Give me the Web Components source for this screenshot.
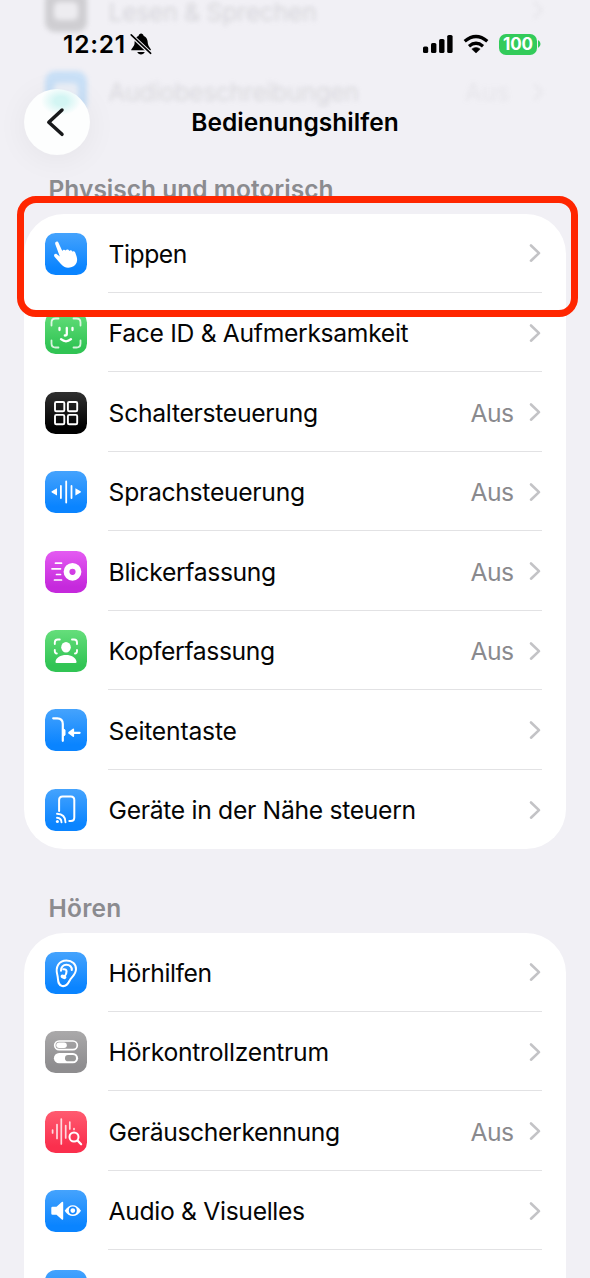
<!DOCTYPE html>
<html lang="de">
<head>
<meta charset="utf-8">
<title>Bedienungshilfen</title>
<style>
html,body{margin:0;padding:0}
body{width:590px;height:1278px;overflow:hidden;background:#f1f0f5;font-family:Inter,"Liberation Sans",sans-serif;color:#050505}
</style>
</head>
<body>
<settings-screen></settings-screen>
<script>
const define=(name,cls)=>customElements.define(name,cls);
const attach=(el,html)=>{const r=el.attachShadow({mode:'open'});const t=document.createElement('template');t.innerHTML=html;r.append(t.content.cloneNode(true));return r;};

/* Text on one line whose tracking is adjusted to a given advance width. */
define('tracked-text',class extends HTMLElement{
  connectedCallback(){
    if(this.shadowRoot)return;
    const r=attach(this,`<style>:host{display:inline-block;white-space:nowrap}span{display:inline-block}</style><span></span>`);
    const s=r.querySelector('span');
    const text=this.getAttribute('text');
    s.textContent=text;
    const w=parseFloat(this.getAttribute('fit'));
    if(w){const n=s.getBoundingClientRect().width;s.style.letterSpacing=((w-n)/text.length).toFixed(3)+'px';}
  }
});

const glyphs={
tap:`<path d="M14.800 23.500 10.300 11.200c-.8-2.500 2.300-3.700 3.300-1.300l3.700 8.200c.3-1.700 2.500-2 3.300-.5.8-1.500 3-1.400 3.600.3 1-1.300 2.800-.8 3.400.8 1-.8 2.300-.2 2.800 1.200l1.200 3.600c1.600 4.900-.5 9-4.800 10.500-4.400 1.500-8.100.4-10.900-3l-6.400-7.300c-1.400-1.700.6-3.700 2.400-2.500z" fill="#fff"/>`,
face:`<g fill="none" stroke="#fff" stroke-linecap="round"><path stroke-width="1.800" opacity=".8" d="M6.500 13.500v-3q0-4 4-4h3M28.500 6.500h3q4 0 4 4v3M35.500 28.500v3q0 4-4 4h-3M13.500 35.500h-3q-4 0-4-4v-3"/><path stroke-width="2.300" d="M14.500 16v2M27.500 16v2M21.800 16v6q0 1.500-2 1.500M16 27.200q5 4.300 10 0"/></g>`,
grid:`<g fill="none" stroke="#fff" stroke-width="1.900"><rect x="10" y="10" width="9.300" height="9.300" rx="1.300"/><rect x="22.900" y="10" width="9.300" height="9.300" rx="1.300"/><rect x="10" y="22.900" width="9.300" height="9.300" rx="1.300"/><rect x="22.900" y="22.900" width="9.300" height="9.300" rx="1.300"/></g>`,
voice:`<path d="M12 17.200v7.200l-5.200-3q-.8-.6 0-1.200zM30.400 17.200v7.200l5.200-3q.8-.6 0-1.200z" fill="#fff"/><path d="M15.900 15v12M21.200 10.500v21M26.500 15v12" stroke="#fff" stroke-width="1.800" stroke-linecap="round"/>`,
gaze:`<circle cx="27.500" cy="20.800" r="6" fill="none" stroke="#fff" stroke-width="5.800"/><path d="M10.500 12.200h6M7 17.800h8.500M11.500 23.500h4M9.500 29h7" stroke="#fff" stroke-width="1.700" stroke-linecap="round"/>`,
head:`<g fill="none" stroke="#fff" stroke-width="1.900" stroke-linecap="round"><path d="M9.800 14v-1.500q0-3 3-3h2M27 9.500h2q3 0 3 3V14M9.800 20v1q0 2.500 2 2.500M32 20v1q0 2.500-2 2.500"/></g><ellipse cx="21" cy="17.300" rx="4.800" ry="5.300" fill="#fff"/><path d="M11.700 33q-1.500 0-1.200-1.500c.8-4 5-6.500 10.500-6.500s9.700 2.500 10.500 6.500q.3 1.500-1.200 1.500z" fill="#fff"/>`,
side:`<path d="M8.200 9.300h4q5.600 0 5.600 5.700v16.800" fill="none" stroke="#fff" stroke-width="2.200" stroke-linecap="round"/><path d="M18 19.500q2.500.3 2.500 2v4q0 1.700-2.500 2z" fill="#fff"/><path d="M26 23.800h8.600" stroke="#fff" stroke-width="2.200" stroke-linecap="round"/><path d="M23.500 23q-.7.800 0 1.500l4.300 3.300q1.300.6 1.300-.8v-6.500q0-1.300-1.300-.7z" fill="#fff"/>`,
near:`<path d="M14.100 22V11q0-3.500 3.500-3.500h8.200q3.500 0 3.500 3.500v17.500q0 3.500-3.500 3.500h-1.500" fill="none" stroke="#fff" stroke-width="2" stroke-linecap="round"/><g fill="none" stroke="#fff" stroke-width="1.900" stroke-linecap="round"><path d="M12 24.800q8.300.2 8.500 8.400M12 28.800q4.300.2 4.500 4.400"/></g><circle cx="12.400" cy="32.600" r="1.500" fill="#fff"/>`,
ear:`<g fill="none" stroke="#fff" stroke-linecap="round" stroke-linejoin="round"><path stroke-width="2" d="M12.400 23.200c-2.400-8.300 1.500-14.700 9.100-14.700 5.800 0 9.700 3.800 9.500 8.700-.2 5.500-4.500 7.800-6.300 11.300-1.700 3.500-3.900 6.300-7.600 5.500-5-1.100-3.600-6.600-4.700-10.800z"/><path stroke-width="2.100" d="M16 18.700c0-3.600 2.200-5.900 5.400-5.900 3.500 0 5.600 2.100 5.400 5.200M18.500 17.300c3.700-.4 4.100 3.200.8 7.600"/></g><ellipse cx="18.500" cy="24.800" rx="3" ry="2" transform="rotate(25 18.500 24.800)" fill="#fff"/>`,
toggles:`<rect x="9.700" y="10" width="22.600" height="8.700" rx="4.350" fill="none" stroke="#fff" stroke-width="1.700"/><rect x="11.300" y="11.600" width="10.500" height="5.500" rx="2.750" fill="#fff"/><rect x="8.900" y="22" width="24.200" height="10.300" rx="5.150" fill="#fff"/><rect x="20" y="24" width="11" height="6.300" rx="3.150" fill="#999"/>`,
sound:`<g stroke="#fff" stroke-linecap="round" stroke-width="1.700" opacity=".8"><path d="M7.600 19v3M12 13.500v14M16.300 8v25M20.700 14.500v12.500M24.800 11v7M29 17.500v1"/></g><circle cx="29" cy="26" r="4.500" fill="none" stroke="#fff" stroke-width="2"/><path d="m32.500 29.500 3.600 3.700" stroke="#fff" stroke-width="2.300" stroke-linecap="round"/>`,
av:`<path d="M7.500 16.800h4l5.300-4.800q1.400-1 1.400.8v16q0 1.700-1.400.7l-5.300-4.700h-4q-1.200 0-1.200-1.200v-5.600q0-1.200 1.200-1.200z" fill="#fff"/><path d="M19.700 20.800c4.200-7.500 12-7.500 16.300 0-4.300 7-12.100 7-16.300 0z" fill="#fff"/><circle cx="27.800" cy="20.600" r="3.200" fill="none" stroke="#1487ff" stroke-width="1.600"/>`,
none:''
};
const fills={blue:['#45a3fd','#0a84ff'],green:['#65de7b','#31c454'],black:['#303030','#000'],purple:['#e45bf2','#c529dc'],gray:['#aaa9aa','#8e8d8f'],red:['#ff5b70','#fa2f4d']};

define('app-icon',class extends HTMLElement{
  connectedCallback(){
    if(this.shadowRoot)return;
    const [a,b]=fills[this.getAttribute('tone')];
    attach(this,`<style>:host{display:block;width:42px;height:42px;flex:none;border-radius:10.500px;background:linear-gradient(${a},${b} 85%)}svg{display:block}</style><svg width="42" height="42" viewBox="0 0 42 42">${glyphs[this.getAttribute('glyph')]}</svg>`);
  }
});

define('settings-row',class extends HTMLElement{
  connectedCallback(){
    if(this.shadowRoot)return;
    const g=n=>this.getAttribute(n);
    attach(this,`<style>
:host{display:flex;height:79.450px;padding:0 24px 0 21px;box-sizing:border-box;gap:21px}
app-icon{margin-top:19.300px}
.body{flex:1;display:flex;align-items:center;box-sizing:border-box;height:79.450px;padding-bottom:.5px;border-bottom:1.500px solid #e2e2e4;font-size:24.700px;line-height:30px}
:host([last]) .body{border-color:transparent}
.label{flex:1;padding:3px 0 0 .6px}.value{color:#8a8a8e;padding-top:3px;margin-right:14.500px}
svg{display:block;margin-right:-.500px;margin-top:2px}
</style><app-icon glyph="${g('glyph')}" tone="${g('tone')}"></app-icon>
<div class="body"><tracked-text class="label" text="${g('label').replace('&','&amp;')}" fit="${g('fit')-.8}"></tracked-text>
${g('value')?`<tracked-text class="value" text="${g('value')}" fit="43"></tracked-text>`:''}
<svg width="14" height="20" viewBox="0 0 14 20"><path d="m3 2.500 8 7.600-8 7.600" fill="none" stroke="#c3c3c6" stroke-width="2.600" stroke-linecap="round" stroke-linejoin="round"/></svg></div>`);
  }
});

define('settings-group',class extends HTMLElement{
  constructor(){
    super();
    attach(this,`<style>:host{display:block;margin:0 24.500px 0 24px;background:#fff;border-radius:40px;overflow:hidden}</style><slot></slot>`);
  }
});

define('section-title',class extends HTMLElement{
  connectedCallback(){
    if(this.shadowRoot)return;
    attach(this,`<style>:host{display:block;padding-left:48.500px;color:#8b8b8f;font-weight:600;font-size:24.500px;line-height:30px}</style><tracked-text text="${this.getAttribute('text')}" fit="${this.getAttribute('fit')}"></tracked-text>`);
  }
});

define('status-bar',class extends HTMLElement{
  constructor(){
    super();
    attach(this,`<style>
:host{display:flex;align-items:center;height:30px;padding:29px 53px 0 63px;font-weight:600;font-size:24.500px;line-height:30px;color:#000}
.bell{margin-left:4px;margin-right:auto}.wifi{margin:0 10px 0 10.500px}
.batt{display:flex;align-items:center;justify-content:center;width:38px;height:21px;border-radius:7px;background:#33cb5a;color:#fff;font-weight:700;font-size:17px;line-height:21px}
svg{display:block}
</style>
<tracked-text text="12:21" fit="63"></tracked-text>
<svg class="bell" width="22" height="24" viewBox="0 0 22 24"><path d="M1.200 18.300c0-1.800 3-3.600 3.300-6.500.3-4 .7-6.500 4-7.800.4-3.400 4.800-3.400 5.200 0 3.300 1.300 3.900 3.800 4.200 7.800.3 2.900 3.200 4.700 3.200 6.500zM7.300 20h7.400c-.8 3.200-6.600 3.200-7.400 0z"/><path d="m1 2.800 19.500 18.500" stroke="#f1f0f5" stroke-width="3.900"/><path d="m1.200 2.800 19.500 18.500" stroke="#000" stroke-width="1.600" stroke-linecap="round"/></svg>
<svg width="30" height="20" viewBox="0 0 30 20"><rect x="0" y="12.500" width="5.200" height="6.500" rx="1.600"/><rect x="8" y="9" width="5.400" height="10" rx="1.600"/><rect x="16.100" y="5" width="5.400" height="14" rx="1.600"/><rect x="24.200" y="1" width="5.400" height="18" rx="1.600"/></svg>
<svg class="wifi" width="26" height="20" viewBox="0 0 26 20"><g fill="none" stroke="#000" stroke-width="3.300"><path d="M1.700 7.300q11.300-9.600 22.600 0"/><path d="M6 12.200q7-5.800 14 0"/></g><path d="M13 19 8.800 15.100q4.200-3.400 8.400 0z" stroke="#000" stroke-width=".5" stroke-linejoin="round"/></svg>
<div class="batt"><tracked-text text="100" fit="30"></tracked-text></div>
<svg width="3" height="8" viewBox="0 0 3 8" style="margin-left:1px;margin-right:-4px"><path d="M0 0q2.500 1.500 2.500 4T0 8z" fill="#33cb5a"/></svg>`);
  }
});

/* Rows that have scrolled beneath the translucent header. */
define('scrolled-under',class extends HTMLElement{
  constructor(){
    super();
    const chevron='<svg class="e" width="14" height="20" viewBox="0 0 14 20"><path d="m3 2 8 8-8 8" fill="none" stroke="#999" stroke-width="2.600"/></svg>';
    attach(this,`<style>
:host{display:block;position:absolute;inset:0 24px auto 24px;filter:blur(2.800px);color:#808086}
.r{display:flex;height:79px;align-items:center;padding:0 21px;font-size:24.700px;line-height:24px;gap:21.500px;opacity:.21}
.top{height:52px;align-items:flex-start;opacity:.24}
.top .i{margin-top:-10px}
.i{width:42px;height:42px;border-radius:10px;background:#666;display:flex;align-items:center;justify-content:center}
.b{background:#35a7ff}.i:before{content:"";width:24px;height:18px;border-radius:5px;background:#fff;opacity:.8}
.l{flex:1}.e{opacity:.45}
</style><div class="r top"><div class="i"></div><tracked-text class="l" text="Lesen &amp; Sprechen" fit="208"></tracked-text>${chevron}</div>
<div class="r"><div class="i b"></div><tracked-text class="l" text="Audiobeschreibungen" fit="250"></tracked-text><span class="e">Aus</span>${chevron}</div>`);
  }
});

define('nav-bar',class extends HTMLElement{
  constructor(){
    super();
    attach(this,`<style>
:host{display:grid;grid-template-columns:66px 1fr 66px;align-items:center;padding:0 24px;height:66px;margin-top:30px}
.back{position:relative;width:66px;height:66px;border-radius:50%;background:radial-gradient(ellipse 20px 14px at 37px 12px,#d3f5f3 30%,#d3f5f300),#fdfefe;box-shadow:0 4px 32px #0000000e}
svg{display:block}
.t{text-align:center;font-weight:600;font-size:24.500px;line-height:30px;color:#000}
</style><div class="back"><svg width="66" height="66" viewBox="0 0 66 66"><path d="M38 21 24.800 33.300 38 45.300" fill="none" stroke="#18191b" stroke-width="3.500" stroke-linecap="round" stroke-linejoin="round"/></svg></div><div class="t"><tracked-text text="Bedienungshilfen" fit="207.500"></tracked-text></div>`);
  }
});

define('highlight-box',class extends HTMLElement{
  constructor(){
    super();
    attach(this,`<style>:host{display:block;position:absolute;left:16.500px;top:195.600px;width:561px;height:121px;box-sizing:border-box;border:7.500px solid #ff2600;border-radius:19px}</style>`);
  }
});

define('settings-screen',class extends HTMLElement{
  connectedCallback(){
    if(this.shadowRoot)return;
    const row=(glyph,tone,label,fit,value='',last='')=>`<settings-row glyph="${glyph}" tone="${tone}" label="${label}" fit="${fit}" ${value?`value="${value}"`:''} ${last}></settings-row>`;
    attach(this,`<style>
:host{display:block;position:relative;width:590px;height:1278px;overflow:hidden;background:#f1f0f5}
header{position:relative;height:174px}
header>status-bar,header>nav-bar{position:relative}
.first{height:39.500px}.second{margin-top:44px;height:39.500px}
</style>
<header><scrolled-under></scrolled-under><status-bar></status-bar><nav-bar></nav-bar></header>
<section-title class="first" text="Physisch und motorisch" fit="285"></section-title>
<settings-group>
${row('tap','blue','Tippen',79)}
${row('face','green','Face ID &amp; Aufmerksamkeit',300.5)}
${row('grid','black','Schaltersteuerung',210,'Aus')}
${row('voice','blue','Sprachsteuerung',197,'Aus')}
${row('gaze','purple','Blickerfassung',168,'Aus')}
${row('head','green','Kopferfassung',167,'Aus')}
${row('side','blue','Seitentaste',129)}
${row('near','blue','Geräte in der Nähe steuern',308,'','last')}
</settings-group>
<section-title class="second" text="Hören" fit="73"></section-title>
<settings-group>
${row('ear','blue','Hörhilfen',104)}
${row('toggles','gray','Hörkontrollzentrum',221)}
${row('sound','red','Geräuscherkennung',232,'Aus')}
${row('av','blue','Audio &amp; Visuelles',197)}
<settings-row glyph="none" tone="blue" label=" " last></settings-row>
</settings-group>
<highlight-box></highlight-box>`);
  }
});
</script>
</body>
</html>
